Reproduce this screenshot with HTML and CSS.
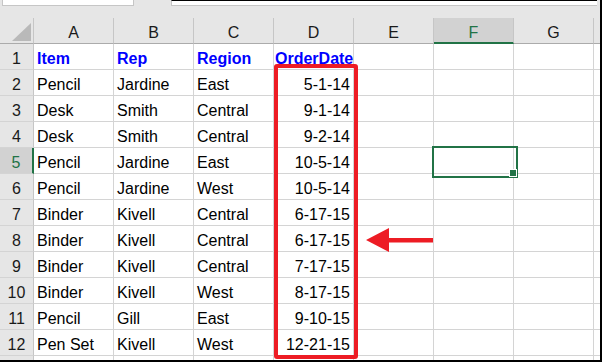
FILE: index.html
```html
<!DOCTYPE html>
<html lang="en">
<head>
    <meta charset="UTF-8">
    <title>Sheet</title>
    <link rel="stylesheet" href="styles.css">
</head>
<body>
<div id="window">
    <div class="toolbar">
        <div class="namebox"></div>
        <div class="formula"></div>
    </div>
    <div class="sheet">
        <div class="corner"><span></span></div>
        <div class="ch">A</div><div class="ch">B</div><div class="ch">C</div><div class="ch">D</div>
        <div class="ch">E</div><div class="ch sel">F</div><div class="ch">G</div><div class="ch last"></div>

        <div class="rh">1</div>
        <div class="c head">Item</div><div class="c head">Rep</div><div class="c head">Region</div><div class="c head wide">OrderDate</div>
        <div class="c"></div><div class="c"></div><div class="c"></div><div class="c last"></div>

        <div class="rh">2</div>
        <div class="c">Pencil</div><div class="c">Jardine</div><div class="c">East</div><div class="c num">5-1-14</div>
        <div class="c"></div><div class="c"></div><div class="c"></div><div class="c last"></div>

        <div class="rh">3</div>
        <div class="c">Desk</div><div class="c">Smith</div><div class="c">Central</div><div class="c num">9-1-14</div>
        <div class="c"></div><div class="c"></div><div class="c"></div><div class="c last"></div>

        <div class="rh">4</div>
        <div class="c">Desk</div><div class="c">Smith</div><div class="c">Central</div><div class="c num">9-2-14</div>
        <div class="c"></div><div class="c"></div><div class="c"></div><div class="c last"></div>

        <div class="rh sel">5</div>
        <div class="c">Pencil</div><div class="c">Jardine</div><div class="c">East</div><div class="c num">10-5-14</div>
        <div class="c"></div><div class="c active"></div><div class="c"></div><div class="c last"></div>

        <div class="rh">6</div>
        <div class="c">Pencil</div><div class="c">Jardine</div><div class="c">West</div><div class="c num">10-5-14</div>
        <div class="c"></div><div class="c"></div><div class="c"></div><div class="c last"></div>

        <div class="rh">7</div>
        <div class="c">Binder</div><div class="c">Kivell</div><div class="c">Central</div><div class="c num">6-17-15</div>
        <div class="c"></div><div class="c"></div><div class="c"></div><div class="c last"></div>

        <div class="rh">8</div>
        <div class="c">Binder</div><div class="c">Kivell</div><div class="c">Central</div><div class="c num">6-17-15</div>
        <div class="c"></div><div class="c"></div><div class="c"></div><div class="c last"></div>

        <div class="rh">9</div>
        <div class="c">Binder</div><div class="c">Kivell</div><div class="c">Central</div><div class="c num">7-17-15</div>
        <div class="c"></div><div class="c"></div><div class="c"></div><div class="c last"></div>

        <div class="rh">10</div>
        <div class="c">Binder</div><div class="c">Kivell</div><div class="c">West</div><div class="c num">8-17-15</div>
        <div class="c"></div><div class="c"></div><div class="c"></div><div class="c last"></div>

        <div class="rh">11</div>
        <div class="c">Pencil</div><div class="c">Gill</div><div class="c">East</div><div class="c num">9-10-15</div>
        <div class="c"></div><div class="c"></div><div class="c"></div><div class="c last"></div>

        <div class="rh">12</div>
        <div class="c">Pen Set</div><div class="c">Kivell</div><div class="c">West</div><div class="c num">12-21-15</div>
        <div class="c"></div><div class="c"></div><div class="c"></div><div class="c last"></div>

        <div class="rh cut"></div>
        <div class="c cut"></div><div class="c cut"></div><div class="c cut"></div><div class="c cut"></div>
        <div class="c cut"></div><div class="c cut"></div><div class="c cut"></div><div class="c cut last"></div>
    </div>

    <!-- annotation: red box round column D and the arrow -->
    <div class="highlight"></div>
    <svg class="arrow" width="72" height="28" viewBox="0 0 72 28">
        <polygon points="2,14 25,2 25,12 69,12 69,16.5 25,16.5 25,26" fill="#ed1c24"/>
    </svg>
</div>
</body>
</html>
```

FILE: styles.css
```css
*{
    margin: 0;
    padding: 0;
    box-sizing: border-box;
}
body{
    width: 602px;
    height: 362px;
    overflow: hidden;
    font-family: "Liberation Sans", Arial, sans-serif;
}
#window{
    position: relative;
    width: 602px;
    height: 362px;
    background: #e6e6e6;
    border-right: 2px solid #000;
    border-bottom: 2px solid #000;
    overflow: hidden;
}
.toolbar{
    height: 18px;
    display: flex;
}
.namebox{
    margin-left: 2px;
    width: 132px;
    height: 6px;
    background: #fff;
    border: 1px solid #c6c6c6;
    border-top: 0;
}
.formula{
    margin-left: 37px;
    margin-right: 3px;
    flex: 1;
    height: 6px;
    background: #fff;
    border-top: 1px solid #000;
    border-left: 1px solid #c6c6c6;
    border-bottom: 1px solid #c6c6c6;
}
.sheet{
    display: grid;
    grid-template-columns: 34px repeat(7, 80px) 6px;
    grid-template-rows: repeat(13, 26px) 4px;
    font-size: 16px;
    line-height: 18px;
}
.corner{
    background: #e6e6e6;
    border-right: 1px solid #c6c6c6;
    border-bottom: 1px solid #ababab;
    display: flex;
    align-items: flex-end;
    justify-content: flex-end;
    padding: 0 2px 2px 0;
}
.corner span{
    width: 19px;
    height: 18px;
    background: #b9b9b9;
    clip-path: polygon(100% 0, 100% 100%, 0 100%);
}
.ch{
    background: #e6e6e6;
    border-right: 1px solid #c6c6c6;
    border-bottom: 1px solid #ababab;
    color: #1a1a1a;
    display: flex;
    align-items: flex-end;
    justify-content: center;
    padding-bottom: 1px;
}
.ch.sel{
    background: #d2d2d2;
    color: #217346;
    border-bottom: 2px solid #217346;
    padding-bottom: 0;
}
.rh{
    background: #e6e6e6;
    border-right: 1px solid #c6c6c6;
    border-bottom: 1px solid #d4d4d4;
    color: #1a1a1a;
    display: flex;
    align-items: flex-end;
    justify-content: center;
    padding-bottom: 1px;
}
.rh.sel{
    background: #d2d2d2;
    color: #217346;
    border-right: 2px solid #217346;
}
.c{
    background: #fff;
    border-right: 1px solid #d4d4d4;
    border-bottom: 1px solid #d4d4d4;
    display: flex;
    align-items: flex-end;
    padding: 0 3px 1px 3px;
    white-space: nowrap;
    color: #000;
}
.c.head{
    font-weight: bold;
    color: #0000ff;
}
.c.wide{
    padding-left: 1px;
}
.c.num{
    justify-content: flex-end;
}
.last{
    border-right: 0;
}
.cut{
    border-bottom: 0;
}
.c.active{
    position: relative;
}
.c.active::after{
    content: "";
    position: absolute;
    left: -2px;
    top: -2px;
    width: 82px;
    height: 28px;
    border: 2px solid #217346;
}
.c.active::before{
    content: "";
    position: absolute;
    right: -4px;
    bottom: -4px;
    width: 6px;
    height: 6px;
    background: #217346;
    border: 1px solid #fff;
    z-index: 1;
}
.highlight{
    position: absolute;
    left: 274px;
    top: 64px;
    width: 84px;
    height: 295px;
    border: 4px solid #ed1c24;
    border-radius: 3px;
}
.arrow{
    position: absolute;
    left: 364px;
    top: 226px;
}
```
